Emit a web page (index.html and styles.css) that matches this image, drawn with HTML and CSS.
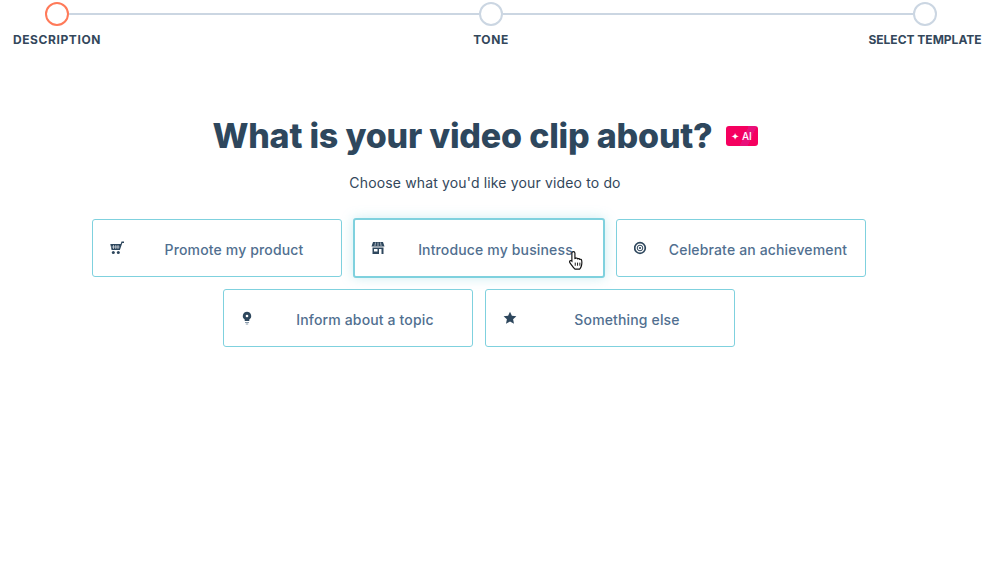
FILE: index.html
```html
<!DOCTYPE html>
<html lang="en">
<head>
  <meta charset="UTF-8">
  <title>Video clip</title>
  <link rel="stylesheet" href="styles.css">
</head>
<body>

  <div class="stepper">
    <div class="track">
      <span class="dot dot-active"></span>
      <span class="line"></span>
      <span class="dot"></span>
      <span class="line"></span>
      <span class="dot"></span>
    </div>
    <div class="labels">
      <span>DESCRIPTION</span>
      <span>TONE</span>
      <span class="label-long">SELECT TEMPLATE</span>
    </div>
  </div>

  <div class="heading">
    <h1>What is your video clip about?</h1>
    <span class="ai-badge">✦ AI</span>
  </div>
  <p class="subtitle">Choose what you'd like your video to do</p>

  <div class="options">
    <div class="option">
      <svg class="icon" viewBox="0 0 14 14"><path d="M14 .5h-2.500L10.700 3H.3l1.300 6h8.300l2.400-7h1.700z" fill="#2e475d"/><path d="M3.500 4v4M5.800 4v4M8 4v4M1.500 6h8" stroke="#fff" stroke-width=".6"/><circle cx="3.300" cy="11.500" r="1.500" fill="#2e475d"/><circle cx="8.300" cy="11.500" r="1.500" fill="#2e475d"/></svg>
      <span class="option-text">Promote my product</span>
    </div>
    <div class="option option-hover">
      <svg class="icon" viewBox="0 0 14 14"><path d="M2 1h10l1.500 4.500H.5z" fill="#2e475d"/><path d="M4.500 1.500l-.6 3.500M7 1.500V5M9.500 1.500l.6 3.500" stroke="#fff" stroke-width=".6"/><path d="M1.500 6.500h11V13h-11z" fill="#2e475d"/><path d="M3 8h3.500v2.500H3zM8 8h2.500v5H8z" fill="#fff"/></svg>
      <span class="option-text">Introduce my business</span>
      <svg class="cursor" viewBox="0 0 16 20"><path d="M5 1.500c.9 0 1.500.6 1.500 1.500v5l1-.3c.8-.2 1.400.1 1.600.7.800-.4 1.600-.2 1.900.5.800-.3 1.700 0 1.900.9.300 1.500.2 3.700-.2 5.200-.4 1.500-1 2.500-1.700 3.200H6.500C5 17 3.500 14.600 1.800 12.300c-.6-.8-.5-1.600.1-2 .6-.4 1.200-.2 1.700.3V3c0-.9.600-1.500 1.400-1.500z" fill="#fff" stroke="#111" stroke-width="1.100"/><path d="M6.800 12v3M9 12v3M11.200 12v3" stroke="#111" stroke-width=".9"/></svg>
    </div>
    <div class="option">
      <svg class="icon" viewBox="0 0 14 14"><circle cx="6" cy="7" r="5.300" fill="none" stroke="#2e475d" stroke-width="1.700"/><circle cx="6" cy="7" r="2.800" fill="none" stroke="#2e475d" stroke-width="1"/><circle cx="6" cy="7" r="1.100" fill="#2e475d"/></svg>
      <span class="option-text">Celebrate an achievement</span>
    </div>
    <div class="option">
      <svg class="icon" viewBox="0 0 14 14"><path d="M6 .8a4.200 4.200 0 0 0-2.300 7.700V10h4.600V8.500A4.200 4.200 0 0 0 6 .8z" fill="#2e475d"/><circle cx="6" cy="5" r="1.300" fill="#fff"/><path d="M4 11h4v1.100H4zM4.800 12.500h2.400v1H4.800z" fill="#8a9bab"/></svg>
      <span class="option-text">Inform about a topic</span>
    </div>
    <div class="option">
      <svg class="icon" viewBox="0 0 14 14"><path d="M7 .7l1.900 4.100 4.500.5-3.300 3 .9 4.500L7 10.600l-4 2.200.9-4.500-3.300-3 4.500-.5z" fill="#2e475d"/></svg>
      <span class="option-text">Something else</span>
    </div>
  </div>

</body>
</html>
```

FILE: styles.css
```css
body {
  margin: 0;
  background: #fff;
  font-family: Inter, "Open Sans", sans-serif;
  color: #33475b;
}
.stepper {
  padding-top: 2px;
}
.track {
  display: flex;
  align-items: center;
  padding: 0 55px 0 45px;
}
.dot {
  width: 24px;
  height: 24px;
  box-sizing: border-box;
  border: 2px solid #cbd6e2;
  border-radius: 50%;
}
.dot-active {
  border-color: #ff7a59;
}
.line {
  flex: 1;
  height: 2px;
  background: #cbd6e2;
}
.labels {
  display: flex;
  justify-content: space-between;
  margin-top: 6px;
  padding-right: 10px;
  font-size: 12px;
  line-height: 16px;
  font-weight: 700;
  letter-spacing: .6px;
}
.labels span {
  width: 114px;
  text-align: center;
  white-space: nowrap;
}
.labels .label-long {
  letter-spacing: 0;
}
.heading {
  display: flex;
  justify-content: center;
  align-items: center;
  gap: 13px;
  margin: 66px 22px 0 0;
}
h1 {
  margin: 0;
  font-size: 34px;
  line-height: 44px;
  font-weight: 800;
  letter-spacing: -.2px;
  color: #2e475d;
}
.ai-badge {
  width: 32px;
  height: 20px;
  border-radius: 3px;
  background: linear-gradient(115deg, #f5005f 55%, #e8107a 55%, #e8107a 75%, #f5005f 75%);
  color: #fff;
  font-size: 10px;
  line-height: 20px;
  font-weight: 500;
  text-align: center;
}
.subtitle {
  margin: 15px 22px 0 0;
  font-size: 14px;
  line-height: 20px;
  letter-spacing: .15px;
  text-align: center;
}
.options {
  display: flex;
  flex-wrap: wrap;
  justify-content: center;
  gap: 12px;
  width: 776px;
  margin: 26px 0 0 91px;
}
.option {
  position: relative;
  display: flex;
  align-items: center;
  width: 250px;
  height: 58px;
  box-sizing: border-box;
  padding: 2px 0 0 17px;
  background: #fff;
  border: 1px solid #7fd1de;
  border-radius: 3px;
  font-size: 14px;
  font-weight: 500;
  letter-spacing: .15px;
  color: #516f90;
}
.option-hover {
  width: 252px;
  height: 60px;
  margin: -1px;
  padding-left: 16px;
  border-width: 2px;
  box-shadow: 0 0 12px rgba(127, 209, 222, .4);
}
.icon {
  flex: none;
  width: 14px;
  height: 14px;
  margin: 0 3px 2px 0;
}
.option-text {
  flex: 1;
  text-align: center;
  white-space: nowrap;
}
.cursor {
  position: absolute;
  left: 213px;
  top: 30px;
  width: 17px;
  height: 21px;
}
```
